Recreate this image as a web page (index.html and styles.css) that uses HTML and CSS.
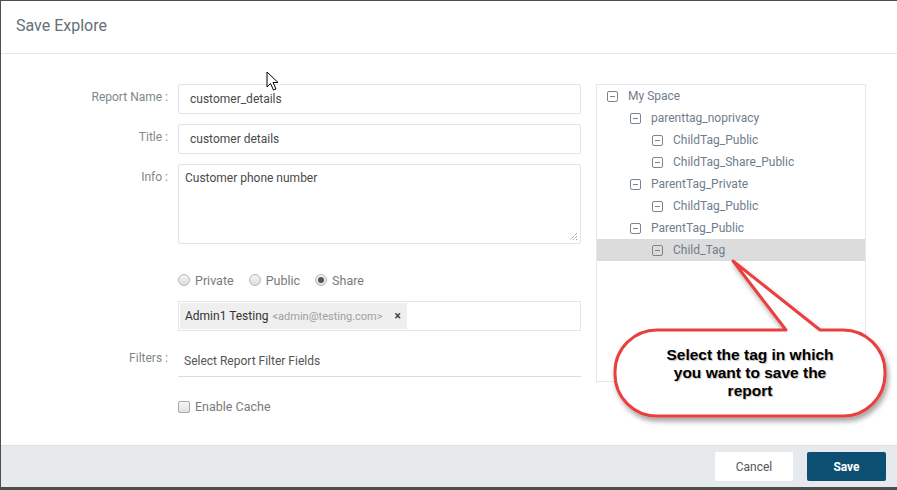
FILE: index.html
```html
<!DOCTYPE html>
<html>
<head>
<meta charset="utf-8">
<link rel="stylesheet" href="styles.css">
</head>
<body>
<div class="modal">
  <div class="modal-header">Save Explore</div>
  <div class="modal-body">
    <div class="form">
      <div class="row">
        <label class="lbl">Report Name :</label>
        <div class="input">customer_details</div>
      </div>
      <div class="row">
        <label class="lbl">Title :</label>
        <div class="input">customer details</div>
      </div>
      <div class="row">
        <label class="lbl">Info :</label>
        <div class="textarea">Customer phone number
          <svg class="grip" width="9" height="9" viewBox="0 0 9 9"><path d="M8 1L1 8M8 4L4 8M8 7L7 8" stroke="#777" stroke-width="1" stroke-dasharray="1 1"/></svg>
        </div>
      </div>
      <div class="row radios-row">
        <div class="lbl"></div>
        <div class="radios">
          <span class="radio-item"><span class="radio"></span>Private</span>
          <span class="radio-item"><span class="radio"></span>Public</span>
          <span class="radio-item"><span class="radio checked"></span>Share</span>
        </div>
      </div>
      <div class="row">
        <div class="lbl"></div>
        <div class="chips">
          <span class="chip">Admin1 Testing <span class="email">&lt;admin@testing.com&gt;</span><span class="x">×</span></span>
        </div>
      </div>
      <div class="row filters-row">
        <label class="lbl">Filters :</label>
        <div class="filter-field">Select Report Filter Fields</div>
      </div>
      <div class="row check-row">
        <div class="lbl"></div>
        <div class="check-item"><span class="checkbox"></span>Enable Cache</div>
      </div>
    </div>
    <div class="tree">
      <div class="node l1"><span class="ico"></span>My Space</div>
      <div class="node l2"><span class="ico"></span>parenttag_noprivacy</div>
      <div class="node l3"><span class="ico"></span>ChildTag_Public</div>
      <div class="node l3"><span class="ico"></span>ChildTag_Share_Public</div>
      <div class="node l2"><span class="ico"></span>ParentTag_Private</div>
      <div class="node l3"><span class="ico"></span>ChildTag_Public</div>
      <div class="node l2"><span class="ico"></span>ParentTag_Public</div>
      <div class="node l3 selected"><span class="ico"></span>Child_Tag</div>
    </div>
  </div>
  <div class="modal-footer">
    <button class="btn cancel">Cancel</button>
    <button class="btn save">Save</button>
  </div>

  <svg class="cursor" width="14" height="22" viewBox="0 0 14 22"><path d="M1 1 L1 16 L4.5 12.5 L7.5 19 L10 18 L7 11.5 L12 11.5 Z" fill="#fff" stroke="#000" stroke-width="1" stroke-linejoin="round"/></svg>

  <svg class="callout" width="897" height="490" viewBox="0 0 897 490">
    <defs>
      <filter id="sh" x="-10%" y="-10%" width="130%" height="140%">
        <feDropShadow dx="2" dy="4" stdDeviation="2.5" flood-color="#000" flood-opacity="0.35"/>
      </filter>
    </defs>
    <path d="M733 261 L786 330 L658 330 A42 42 0 0 0 615 372 L615 374 A42 42 0 0 0 658 416 L842 416 A42 42 0 0 0 885 374 L885 372 A42 42 0 0 0 842 330 L820 330 Z" fill="#fff" stroke="#e8413f" stroke-width="3" stroke-linejoin="round" filter="url(#sh)"/>
  </svg>
  <div class="callout-text">Select the tag in which<br>you want to save the<br>report</div>
</div>
</body>
</html>
```
FILE: styles.css
```css
* { box-sizing: border-box; }
html, body { margin: 0; padding: 0; }
body {
  background: #4d4d4d;
  width: 897px;
  height: 490px;
  overflow: hidden;
  padding: 1px 0 0 1px;
  font-family: Roboto, "Liberation Sans", sans-serif;
}
.modal {
  position: relative;
  width: 896px;
  height: 486px;
  background: #fff;
  display: flex;
  flex-direction: column;
}
.modal-header {
  height: 53px;
  border-bottom: 1px solid #e4e6e8;
  padding: 15px 0 0 15px;
  font-size: 16px;
  color: #64707a;
}
.modal-body {
  flex: 1;
  display: flex;
  padding: 30px 0 0 0;
}
.form {
  width: 580px;
  display: flex;
  flex-direction: column;
}
.row {
  display: flex;
  margin-bottom: 10px;
}
.lbl {
  width: 167px;
  flex: none;
  text-align: right;
  margin-right: 10px;
  font-size: 12px;
  color: #80878d;
  padding-top: 6px;
}
.input {
  width: 403px;
  height: 30px;
  border: 1px solid #e2e4e6;
  border-radius: 2px;
  padding: 7px 11px;
  font-size: 12px;
  color: #4a4a4a;
}
.textarea {
  position: relative;
  width: 403px;
  height: 80px;
  border: 1px solid #e2e4e6;
  border-radius: 2px;
  padding: 6px 6px;
  font-size: 12px;
  color: #4a4a4a;
}
.grip { position: absolute; right: 2px; bottom: 2px; }
.radios-row { margin-top: 16px; margin-bottom: 11px; }
.radios { display: flex; align-items: center; font-size: 12.5px; color: #7a7a7a; height: 20px; }
.radio-item { display: flex; align-items: center; margin-right: 15px; }
.radio {
  width: 12px; height: 12px; border-radius: 50%;
  border: 1px solid #b7b7b7;
  background: linear-gradient(#f4f4f4, #dedede);
  margin-right: 5px;
  display: inline-flex; align-items: center; justify-content: center;
}
.radio.checked::after {
  content: ""; width: 6px; height: 6px; border-radius: 50%; background: #555;
}
.chips {
  width: 403px;
  height: 30px;
  border: 1px solid #e2e4e6;
  padding: 1px;
}
.chip {
  display: inline-flex; align-items: center;
  height: 26px;
  background: #efefef;
  padding: 0 6px 0 5px;
  font-size: 12px;
  color: #333;
}
.email { color: #a0a0a0; font-size: 11px; margin-left: 4px; }
.x { font-size: 12px; font-weight: bold; color: #444; margin-left: 12px; }
.filters-row { margin-top: 5px; margin-bottom: 0; }
.filters-row .lbl { padding-top: 5px; }
.filter-field {
  width: 403px;
  height: 31px;
  border-bottom: 1px solid #dcdcdc;
  padding: 8px 6px;
  font-size: 12px;
  color: #555;
}
.check-row { margin-top: 22px; }
.check-item { display: flex; align-items: center; font-size: 12.5px; color: #7a7a7a; }
.checkbox {
  width: 12px; height: 12px; border: 1px solid #a9a9a9; border-radius: 2px;
  background: linear-gradient(#f7f7f7, #e2e2e2); margin-right: 5px;
}
.tree {
  margin-left: 15px;
  width: 270px;
  height: 298px;
  border: 1px solid #e6e7e9;
}
.node {
  height: 22px;
  display: flex;
  align-items: center;
  font-size: 12px;
  color: #6f7d8c;
}
.node.l1 { padding-left: 10px; }
.node.l2 { padding-left: 33px; }
.node.l3 { padding-left: 55px; }
.node.selected { background: #dcdcdc; }
.ico {
  width: 11px; height: 11px;
  border: 1px solid #7b8590;
  border-radius: 2px;
  margin-right: 10px;
  position: relative;
}
.ico::after {
  content: ""; position: absolute; left: 2px; right: 2px; top: 4px; height: 1px; background: #7b8590;
}
.modal-footer {
  height: 42px;
  background: #e6eaed;
  border-top: 1px solid #dde1e4;
  display: flex;
  justify-content: flex-end;
  align-items: center;
  padding-right: 11px;
  gap: 14px;
}
.btn {
  height: 29px;
  border: none;
  border-radius: 2px;
  font-family: Roboto, "Liberation Sans", sans-serif;
  font-size: 12px;
}
.cancel { width: 78px; background: #fff; color: #555; }
.save { width: 79px; background: #0d4f73; color: #fff; font-weight: bold; }
.cursor { position: absolute; left: 265px; top: 70px; }
.callout { position: absolute; left: -1px; top: -1px; pointer-events: none; }
.callout-text {
  position: absolute;
  left: 614px; top: 345px;
  width: 270px;
  text-align: center;
  font-family: "Liberation Sans", Arial, sans-serif;
  font-weight: bold;
  font-size: 15.5px;
  line-height: 18px;
  color: #000;
  text-shadow: 1px 1px 1px rgba(0,0,0,0.25);
}
```
